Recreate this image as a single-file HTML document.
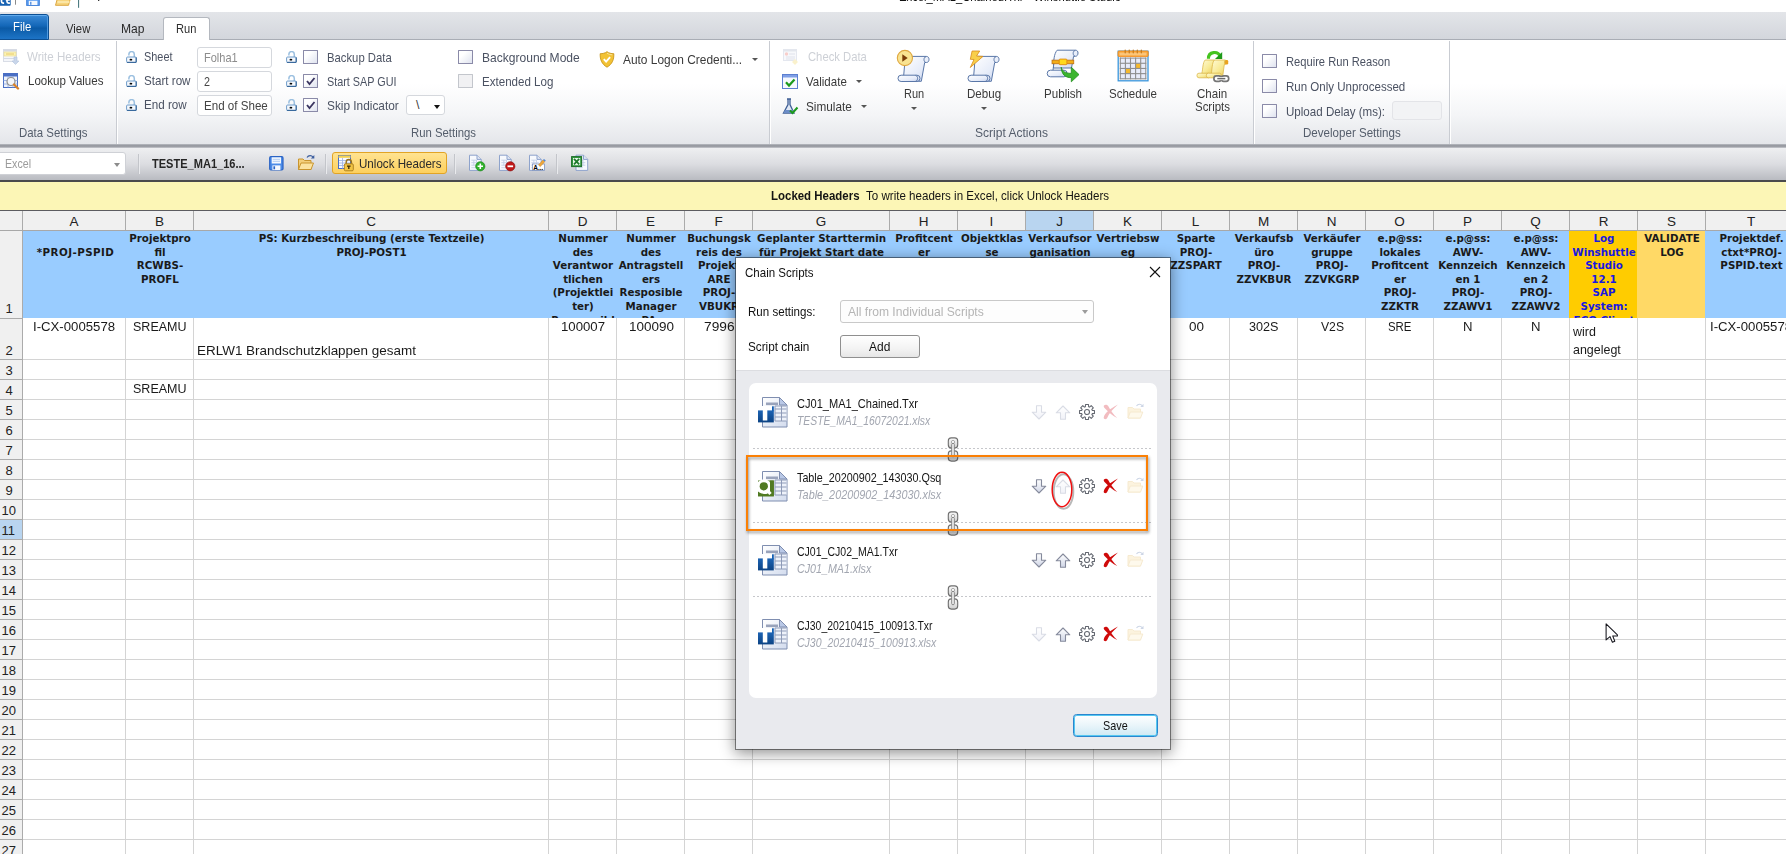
<!DOCTYPE html>
<html lang="en">
<head>
<meta charset="utf-8">
<title>Winshuttle Studio - Chain Scripts</title>
<style>
*{box-sizing:border-box;margin:0;padding:0}
html,body{width:1786px;height:854px;overflow:hidden;background:#fff}
body{position:relative;font-family:"Liberation Sans","DejaVu Sans",sans-serif;font-size:12px;color:#222}
.abs{position:absolute}
.t{position:absolute;white-space:nowrap;line-height:16px;height:16px;font-size:12.4px;color:#3a3a3a;transform-origin:0 0}
.dis{color:#cdd0d6}
.b{color:#4b5262}
.gl{color:#545d6b}
#titlebar{position:absolute;left:0;top:0;width:1786px;height:12px;background:#fff;overflow:hidden}
#tabband{position:absolute;left:0;top:12px;width:1786px;height:28px;background:linear-gradient(#e3e5e9,#d3d6dc);border-bottom:1px solid #a9adb5}
#filetab{position:absolute;left:-2px;top:14px;width:51px;height:26px;border-radius:3px 3px 0 0;background:linear-gradient(#3b8ad6 0%,#1467b8 45%,#0b5aa6 55%,#1d74c6 100%);border:1px solid #0d4f92;color:#fff;box-shadow:inset 0 1px 0 #62aaec,inset -1px 0 0 #4f9ae0}
.tab{position:absolute;transform-origin:0 0;white-space:nowrap;top:20px;font-size:13.5px;line-height:18px;color:#2b2b2b}
#runtab{position:absolute;left:163px;top:17px;width:47px;height:24px;background:#fff;border:1px solid #b4b8bf;border-bottom:none;border-radius:3px 3px 0 0}
#ribbon{position:absolute;left:0;top:40px;width:1786px;height:104px;background:linear-gradient(#ffffff 0%,#ffffff 42%,#f4f5f7 72%,#e4e6ea 100%)}
.rsep{position:absolute;top:1px;width:2px;height:103px;background:linear-gradient(90deg,#c9ccd2 0 1px,#fff 1px 2px)}
.inp{position:absolute;width:75px;height:21px;border:1px solid #d5d8dd;border-radius:3px;background:#fff;overflow:hidden}
.cb{position:absolute;width:15px;height:14px;border:1px solid #8a8aa8;border-radius:.5px;background:linear-gradient(135deg,#ffffff 30%,#dfe3ef)}
.cb.off{border-color:#c3c6cc;background:#f1f1f3}
.arrow{position:absolute;width:0;height:0;border-left:3px solid transparent;border-right:3px solid transparent;border-top:3px solid #555}
#rbottom{position:absolute;left:0;top:144px;width:1786px;height:4px;background:linear-gradient(#b9bcc2,#8d9097 50%,#c9cbd0)}
#toolbar{position:absolute;left:0;top:148px;width:1786px;height:32px;background:linear-gradient(#eeeff1 0%,#dcdde1 50%,#b9bbc1 100%)}
#tbottom{position:absolute;left:0;top:180px;width:1786px;height:2px;background:#4a4a4c}
.tsep{position:absolute;top:6px;width:2px;height:20px;background:linear-gradient(90deg,#c3c5ca 0 1px,#e9eaed 1px 2px)}
#ybar{position:absolute;left:0;top:182px;width:1786px;height:28px;background:#fcf6b6}
#sheet{position:absolute;left:0;top:210px;width:1786px;height:644px;background:#fff;overflow:hidden}
.colh{position:absolute;top:1px;height:19px;padding-top:1px;background:#f0f0f0;border-left:1px solid #ababab;font-size:13.5px;line-height:20px;text-align:center;color:#222}
.hd{position:absolute;top:21px;height:87px;background:#99ccff;overflow:hidden;text-align:center;font-family:"DejaVu Sans","Liberation Sans",sans-serif;font-weight:bold;font-size:10.3px;line-height:13.6px;color:#1a1a1a;padding-top:1px;padding-left:2px;white-space:nowrap}
.vl{position:absolute;top:108px;width:1px;height:540px;background:#d4d4d4}
.rowh{position:absolute;left:0;width:22px;background:#f0f0f0;border-top:1px solid #ababab;font-size:13px;color:#222;text-align:left}
.c{position:absolute;font-size:13.4px;line-height:16px;color:#1a1a1a;white-space:nowrap;text-align:center;transform-origin:0 0}
#dlg{position:absolute;left:735px;top:257px;width:436px;height:493px;background:#e9eaee;border:1px solid rgba(0,0,0,.44);background-clip:padding-box;box-shadow:0 3px 14px rgba(0,0,0,.45)}
#dlgtop{position:absolute;left:0;top:0;width:434px;height:113px;background:#fff;border-bottom:1px solid #dcdde1}
#list{position:absolute;left:13px;top:125px;width:408px;height:314.5px;background:#fff;border-radius:7px}
.dash{position:absolute;left:4px;width:399px;height:1px;background:repeating-linear-gradient(90deg,#c6c7cb 0 2px,transparent 2px 4px)}
</style>
</head>
<body>
<div id="titlebar">
<svg class="abs" style="left:0px;top:0px" width="110" height="12" viewBox="0 0 110 12"><rect x="-4" y="-8" width="14.700" height="13.800" rx="1" fill="#1762b2"/><path d="M1.500 -2v3.600c0 1 .6 1.500 1.600 1.500h1M7 -2v3.600c0 1 .6 1.500 1.600 1.500h1.300M5.800 0h4" stroke="#fff" stroke-width="1.700" fill="none"/><rect x="15" y="0" width="1" height="4.700" fill="#8a8a8a"/><rect x="26.700" y="-6" width="12.600" height="11.400" fill="#5b9df0" stroke="#3f7fd8" stroke-width="1"/><rect x="28.800" y=".8" width="8.600" height="4.200" fill="#f4f8fe"/><rect x="30.200" y="1.800" width="1.200" height="3" fill="#3f7fd8"/><path d="M55.500 5.300l2.500-9h13l-2.500 9z" fill="#f7d57e" stroke="#dba743" stroke-width="1"/><path d="M57.500 2h12" stroke="#fbe6a6" stroke-width="2"/><rect x="78.100" y="0" width="1" height="7.800" fill="#3b6e75"/><rect x="98" y="0" width="1.300" height=".9" fill="#222"/></svg>
<div class="t" style="left:899px;top:-11.4px;font-size:13.4px;color:#111;transform:scaleX(0.840)">Excel_MA1_Chained.Txr - Winshuttle Studio</div>
</div>
<div id="tabband"></div>
<div id="filetab"><div class="tab" style="left:14.2px;top:3px;color:#fff;transform:scaleX(0.836)">File</div></div>
<div class="tab" style="left:65.5px;transform:scaleX(0.837)">View</div>
<div class="tab" style="left:121.3px;transform:scaleX(0.895)">Map</div>
<div id="runtab"></div>
<div class="tab" style="left:176.3px;transform:scaleX(0.820)">Run</div>
<div id="ribbon">
<svg class="abs" style="left:3px;top:9px" width="17" height="16" viewBox="0 0 17 16"><rect x=".5" y=".5" width="13" height="12" fill="#f4f6fa" stroke="#d9dde6"/><rect x=".5" y=".5" width="13" height="2" fill="#d5d9e2"/><rect x="1" y="3" width="12" height="4" fill="#fbf3b5" stroke="#ecd98a" stroke-width=".6"/><path d="M3 5h8" stroke="#e8c96a"/><path d="M1 9.500h10" stroke="#d5dbe6"/><path d="M11 8h3v4h2l-3.500 3.500L9 12h2z" fill="#c9d6ea" stroke="#b4c4dd" stroke-width=".6"/></svg>
<div class="t dis" style="left:27.4px;top:9px;transform:scaleX(0.932)">Write Headers</div>
<svg class="abs" style="left:3px;top:33px" width="17" height="17" viewBox="0 0 17 17"><rect x=".5" y=".5" width="14" height="14" fill="#eef3fc" stroke="#4a6fc4"/><rect x=".5" y=".5" width="14" height="3" fill="#4a6fc4"/><path d="M.5 7.500h14M.5 11h14M5 3.500v11M10 3.500v11" stroke="#8aa6e0" stroke-width=".8"/><circle cx="8" cy="8.500" r="4" fill="#f4f7fb" stroke="#8f8f8f" stroke-width="1.200"/><path d="M11 11.500l4 4" stroke="#d9822a" stroke-width="2.400" stroke-linecap="round"/></svg>
<div class="t " style="left:27.5px;top:33px;transform:scaleX(0.931)">Lookup Values</div>
<div class="t gl" style="left:19.3px;top:85px;transform:scaleX(0.922)">Data Settings</div>
<div class="rsep" style="left:116px"></div>
<svg class="abs" style="left:126px;top:11.3px" width="11" height="12" viewBox="0 0 11 12"><path d="M8.300 6.500V3.300a2.700 2.700 0 0 0-5.400 0V4.400" fill="none" stroke="#9cc0e0" stroke-width="1.500"/><rect x=".6" y="6" width="9.600" height="5.600" rx="1" fill="#f4f8fd" stroke="#6f9ccb" stroke-width="1"/><path d="M1 11.300h9.200v-5" fill="none" stroke="#2a5c92" stroke-width="1"/><ellipse cx="4.900" cy="8.700" rx="1.400" ry=".85" fill="#050505"/></svg>
<div class="t b" style="left:144.3px;top:9px;transform:scaleX(0.880)">Sheet</div>
<svg class="abs" style="left:126px;top:35.3px" width="11" height="12" viewBox="0 0 11 12"><path d="M8.300 6.500V3.300a2.700 2.700 0 0 0-5.400 0V4.400" fill="none" stroke="#9cc0e0" stroke-width="1.500"/><rect x=".6" y="6" width="9.600" height="5.600" rx="1" fill="#f4f8fd" stroke="#6f9ccb" stroke-width="1"/><path d="M1 11.300h9.200v-5" fill="none" stroke="#2a5c92" stroke-width="1"/><ellipse cx="4.900" cy="8.700" rx="1.400" ry=".85" fill="#050505"/></svg>
<div class="t b" style="left:144.3px;top:33px;transform:scaleX(0.938)">Start row</div>
<svg class="abs" style="left:126px;top:59.3px" width="11" height="12" viewBox="0 0 11 12"><path d="M8.300 6.500V3.300a2.700 2.700 0 0 0-5.400 0V4.400" fill="none" stroke="#9cc0e0" stroke-width="1.500"/><rect x=".6" y="6" width="9.600" height="5.600" rx="1" fill="#f4f8fd" stroke="#6f9ccb" stroke-width="1"/><path d="M1 11.300h9.200v-5" fill="none" stroke="#2a5c92" stroke-width="1"/><ellipse cx="4.900" cy="8.700" rx="1.400" ry=".85" fill="#050505"/></svg>
<div class="t b" style="left:144.3px;top:57px;transform:scaleX(0.939)">End row</div>
<div class="inp" style="left:197px;top:7px"><div class="abs" style="left:0;top:0;width:69.5px;height:20px;overflow:hidden"><div class="t" style="left:6px;top:1.5px;color:#8c8c8c;transform:scaleX(0.889)">Folha1</div></div></div>
<div class="inp" style="left:197px;top:31px"><div class="abs" style="left:0;top:0;width:69.5px;height:20px;overflow:hidden"><div class="t" style="left:6px;top:1.5px;color:#444;transform:scaleX(0.869)">2</div></div></div>
<div class="inp" style="left:197px;top:55px"><div class="abs" style="left:0;top:0;width:69.5px;height:20px;overflow:hidden"><div class="t" style="left:6px;top:1.5px;color:#444;transform:scaleX(0.935)">End of Sheet</div></div></div>
<svg class="abs" style="left:285.6px;top:11.3px" width="11" height="12" viewBox="0 0 11 12"><path d="M8.300 6.500V3.300a2.700 2.700 0 0 0-5.400 0V4.400" fill="none" stroke="#9cc0e0" stroke-width="1.500"/><rect x=".6" y="6" width="9.600" height="5.600" rx="1" fill="#f4f8fd" stroke="#6f9ccb" stroke-width="1"/><path d="M1 11.300h9.200v-5" fill="none" stroke="#2a5c92" stroke-width="1"/><ellipse cx="4.900" cy="8.700" rx="1.400" ry=".85" fill="#050505"/></svg>
<div class="cb" style="left:303px;top:10px"></div>
<div class="t b" style="left:327.3px;top:10px;transform:scaleX(0.912)">Backup Data</div>
<svg class="abs" style="left:285.6px;top:35.3px" width="11" height="12" viewBox="0 0 11 12"><path d="M8.300 6.500V3.300a2.700 2.700 0 0 0-5.400 0V4.400" fill="none" stroke="#9cc0e0" stroke-width="1.500"/><rect x=".6" y="6" width="9.600" height="5.600" rx="1" fill="#f4f8fd" stroke="#6f9ccb" stroke-width="1"/><path d="M1 11.300h9.200v-5" fill="none" stroke="#2a5c92" stroke-width="1"/><ellipse cx="4.900" cy="8.700" rx="1.400" ry=".85" fill="#050505"/></svg>
<div class="cb" style="left:303px;top:34px"><svg width="13" height="12" viewBox="0 0 13 12" style="position:absolute;left:0;top:0"><path d="M3 6l2.500 3L10.500 3" fill="none" stroke="#3a3560" stroke-width="1.800"/></svg></div>
<div class="t b" style="left:327.3px;top:34px;transform:scaleX(0.872)">Start SAP GUI</div>
<svg class="abs" style="left:285.6px;top:59.3px" width="11" height="12" viewBox="0 0 11 12"><path d="M8.300 6.500V3.300a2.700 2.700 0 0 0-5.400 0V4.400" fill="none" stroke="#9cc0e0" stroke-width="1.500"/><rect x=".6" y="6" width="9.600" height="5.600" rx="1" fill="#f4f8fd" stroke="#6f9ccb" stroke-width="1"/><path d="M1 11.300h9.200v-5" fill="none" stroke="#2a5c92" stroke-width="1"/><ellipse cx="4.900" cy="8.700" rx="1.400" ry=".85" fill="#050505"/></svg>
<div class="cb" style="left:303px;top:58px"><svg width="13" height="12" viewBox="0 0 13 12" style="position:absolute;left:0;top:0"><path d="M3 6l2.500 3L10.500 3" fill="none" stroke="#3a3560" stroke-width="1.800"/></svg></div>
<div class="t b" style="left:327.3px;top:58px;transform:scaleX(0.955)">Skip Indicator</div>
<div class="inp" style="left:406px;top:55px;width:39px;height:20px"><div class="t" style="left:9px;top:1px">\</div><div class="arrow" style="left:27px;top:9px;border-width:4px 3.5px 0;border-top-color:#111"></div></div>
<div class="cb" style="left:458px;top:10px"></div>
<div class="t b" style="left:482.4px;top:10px;transform:scaleX(0.972)">Background Mode</div>
<div class="cb off" style="left:458px;top:34px"></div>
<div class="t b" style="left:482.4px;top:34px;transform:scaleX(0.934)">Extended Log</div>
<svg class="abs" style="left:599px;top:11px" width="16" height="17" viewBox="0 0 16 17"><path d="M8 .7c2 1.500 4.300 2 6.800 2 .3 6-1.700 10.500-6.800 13.500C2.900 13.200.9 8.700 1.200 2.700 3.700 2.700 6 2.200 8 .7z" fill="#f2c235" stroke="#c9951a" stroke-width=".9"/><path d="M8 2.200c1.700 1.100 3.400 1.500 5.300 1.600" fill="none" stroke="#fbe59a" stroke-width="1"/><path d="M4.800 8.200l2.300 2.400 4-4.400" fill="none" stroke="#fff" stroke-width="1.900"/></svg>
<div class="t " style="left:623.3px;top:12px;transform:scaleX(0.961)">Auto Logon Credenti...</div>
<div class="arrow" style="left:752px;top:18px"></div>
<div class="t gl" style="left:410.7px;top:85px;transform:scaleX(0.916)">Run Settings</div>
<div class="rsep" style="left:769px"></div>
<svg class="abs" style="left:783px;top:9px;opacity:.55" width="17" height="16" viewBox="0 0 17 16"><rect x=".5" y=".5" width="13" height="11" fill="#f2f4f9" stroke="#cfd5e2"/><rect x=".5" y=".5" width="13" height="2" fill="#cdd3e0"/><circle cx="3.500" cy="5" r="1.700" fill="#f3a7a0"/><path d="M6 5h6M3 8h9M3 10h9" stroke="#c5ccdb"/><path d="M12 10l3 3-3 3-3-3z" fill="#f7e7a4"/></svg>
<div class="t dis" style="left:808.4px;top:9px;transform:scaleX(0.908)">Check Data</div>
<svg class="abs" style="left:782px;top:34px" width="17" height="15" viewBox="0 0 17 15"><rect x=".5" y=".5" width="15" height="14" fill="#f6f8fe" stroke="#5c7fd0"/><rect x="1" y="1" width="14" height="2.500" fill="#7f9fe6"/><path d="M4 8.200l3 3.300 5.500-6" fill="none" stroke="#1c9a1c" stroke-width="2.200"/></svg>
<div class="t " style="left:806.2px;top:34px;transform:scaleX(0.930)">Validate</div>
<div class="arrow" style="left:856px;top:40px"></div>
<svg class="abs" style="left:782px;top:58px" width="17" height="17" viewBox="0 0 17 17"><path d="M5 1h4M6 1.500v5L1.500 15h10.500L8 6.500v-5" fill="#dfe7f5" stroke="#3f5f95" stroke-width="1.300"/><path d="M3 12l-1.500 3h10.500l-1.500-3z" fill="#6b8cc7"/><path d="M8 12.500l2.500 2.500 5-5.500" fill="none" stroke="#1c9a1c" stroke-width="2"/></svg>
<div class="t " style="left:806.2px;top:59px;transform:scaleX(0.950)">Simulate</div>
<div class="arrow" style="left:861px;top:65px"></div>
<svg class="abs" style="left:896px;top:9px" width="34" height="34" viewBox="0 0 34 34"><defs><linearGradient id="SG" x1="0" y1="0" x2="1" y2="1"><stop offset="0" stop-color="#ffffff"/><stop offset=".6" stop-color="#e6ecf9"/><stop offset="1" stop-color="#c3d0ee"/></linearGradient></defs><path d="M9 7.400H30.300C32.300 7.400 33 8.900 33 10.400 33 12.300 32 13.500 30.400 13.500H28.700L25.300 32.300H7.200L8.500 17z" fill="url(#SG)" stroke="#5a77a8" stroke-width="1" stroke-linejoin="round"/><path d="M30.200 7.600C28.400 8 28 9.500 28 10.500 28 12 28.600 13 29.700 13.400" fill="none" stroke="#5a77a8" stroke-width="1"/><rect x="2" y="26.200" width="22" height="6.300" rx="3.100" fill="url(#SG)" stroke="#5a77a8" stroke-width="1"/><path d="M19.500 26.400C21.300 27 21.600 28.400 21.600 29.300 21.600 30.600 21 31.800 19.500 32.300" fill="none" stroke="#5a77a8" stroke-width="1"/><circle cx="8.900" cy="9" r="7.600" fill="#f9e391" stroke="#dfa840" stroke-width="1.100"/><path d="M6.300 5.300v7.400l5.400-3.700z" fill="#7a3c08"/></svg>
<div class="t " style="left:903.5px;top:46px;transform:scaleX(0.889)">Run</div>
<div class="arrow" style="left:911px;top:67px"></div>
<svg class="abs" style="left:966px;top:9px" width="34" height="34" viewBox="0 0 34 34"><defs><linearGradient id="SG2" x1="0" y1="0" x2="1" y2="1"><stop offset="0" stop-color="#ffffff"/><stop offset=".6" stop-color="#e6ecf9"/><stop offset="1" stop-color="#c3d0ee"/></linearGradient></defs><path d="M9 7.400H30.300C32.300 7.400 33 8.900 33 10.400 33 12.300 32 13.500 30.400 13.500H28.700L25.300 32.300H7.200L8.500 17z" fill="url(#SG2)" stroke="#5a77a8" stroke-width="1" stroke-linejoin="round"/><path d="M30.200 7.600C28.400 8 28 9.500 28 10.500 28 12 28.600 13 29.700 13.400" fill="none" stroke="#5a77a8" stroke-width="1"/><rect x="2" y="26.200" width="22" height="6.300" rx="3.100" fill="url(#SG2)" stroke="#5a77a8" stroke-width="1"/><path d="M19.500 26.400C21.300 27 21.600 28.400 21.600 29.300 21.600 30.600 21 31.800 19.500 32.300" fill="none" stroke="#5a77a8" stroke-width="1"/><path d="M6.100 2h7.600l-3.200 5 6.500.4L4.300 18.500 8 10.500l-3.700-.2z" fill="#f8cf4a" stroke="#d98a1a" stroke-width=".8" stroke-linejoin="round"/></svg>
<div class="t " style="left:966.5px;top:46px;transform:scaleX(0.934)">Debug</div>
<div class="arrow" style="left:981px;top:67px"></div>
<svg class="abs" style="left:1046px;top:9px" width="34" height="34" viewBox="0 0 34 34"><defs><linearGradient id="SG3" x1="0" y1="0" x2="1" y2="1"><stop offset="0" stop-color="#ffffff"/><stop offset=".6" stop-color="#e6ecf9"/><stop offset="1" stop-color="#c3d0ee"/></linearGradient></defs><path d="M11.200 1.200H29.500C31.300 1.200 32 2.600 32 4 32 5.900 31 7.300 29.500 7.300H27.600L25.500 19H7.500C7.500 12 8 4.500 11.200 1.200z" fill="url(#SG3)" stroke="#5a77a8" stroke-width="1" stroke-linejoin="round"/><path d="M29.400 1.400C27.600 1.800 27.200 3.200 27.200 4.300 27.200 5.800 27.800 6.800 28.900 7.200" fill="none" stroke="#5a77a8"/><rect x="1.200" y="21.200" width="20" height="6.600" rx="3.300" fill="url(#SG3)" stroke="#5a77a8" stroke-width="1"/><path d="M7 21.200L8 13" stroke="#5a77a8" fill="none"/><rect x="6" y="11.100" width="21.800" height="3.700" fill="#f3ae1a" stroke="#b9660c" stroke-width=".7"/><rect x="13.200" y="10.100" width="7.700" height="5.600" rx=".8" fill="#ffd91c" stroke="#e08a12" stroke-width=".9"/><path d="M15.200 18.200C16 22 19.500 24.500 25.300 24.300V18.200L33 25.600 25.300 32.800V28.600C19.500 29 15.200 25 15.200 18.200z" fill="#3cb52f" stroke="#1f8e1c" stroke-width=".8" stroke-linejoin="round"/></svg>
<div class="t " style="left:1043.5px;top:46px;transform:scaleX(0.937)">Publish</div>
<svg class="abs" style="left:1117px;top:9px" width="32" height="33" viewBox="0 0 32 33"><rect x="1.200" y="2.200" width="29.800" height="29.600" fill="#fff" stroke="#3a96dc" stroke-width="1.300"/><rect x="1" y="2" width="30.200" height="5.500" rx="1" fill="#f9a53a" stroke="#f08a1c" stroke-width=".8"/><rect x="2.500" y="3.600" width="27" height="2.800" fill="#fbc57a"/><path d="M8.2 1.100v2.700" stroke="#c27a1e" stroke-width="1.200" stroke-linecap="round"/><path d="M12.23 1.100v2.700" stroke="#c27a1e" stroke-width="1.200" stroke-linecap="round"/><path d="M16.26 1.100v2.700" stroke="#c27a1e" stroke-width="1.200" stroke-linecap="round"/><path d="M20.29 1.100v2.700" stroke="#c27a1e" stroke-width="1.200" stroke-linecap="round"/><path d="M24.32 1.100v2.700" stroke="#c27a1e" stroke-width="1.200" stroke-linecap="round"/><rect x="3.300" y="9.100" width="25.500" height="20.700" fill="#e8ecfa"/><rect x="18.600" y="14.300" width="5.100" height="5.200" fill="#f6b92e"/><rect x="8.400" y="19.450" width="5.100" height="5.200" fill="#f6b92e"/><path d="M3.3 8.600v21.700" stroke="#8e8e8e" stroke-width="1.100"/><path d="M8.4 8.600v21.700" stroke="#8e8e8e" stroke-width="1.100"/><path d="M13.5 8.600v21.700" stroke="#8e8e8e" stroke-width="1.100"/><path d="M18.6 8.600v21.700" stroke="#8e8e8e" stroke-width="1.100"/><path d="M23.7 8.600v21.700" stroke="#8e8e8e" stroke-width="1.100"/><path d="M28.8 8.600v21.700" stroke="#8e8e8e" stroke-width="1.100"/><path d="M2.800 9.1h26.500" stroke="#8e8e8e" stroke-width="1.100"/><path d="M2.800 14.275h26.500" stroke="#8e8e8e" stroke-width="1.100"/><path d="M2.800 19.45h26.500" stroke="#8e8e8e" stroke-width="1.100"/><path d="M2.800 24.625h26.500" stroke="#8e8e8e" stroke-width="1.100"/><path d="M2.800 29.8h26.500" stroke="#8e8e8e" stroke-width="1.100"/></svg>
<div class="t " style="left:1109px;top:46px;transform:scaleX(0.929)">Schedule</div>
<svg class="abs" style="left:1196px;top:10px" width="34" height="33" viewBox="0 0 34 33"><defs><linearGradient id="YG" x1="0" y1="0" x2="1" y2="1"><stop offset="0" stop-color="#fffbd8"/><stop offset=".55" stop-color="#f8ea95"/><stop offset="1" stop-color="#e9c95a"/></linearGradient></defs><path d="M12.400 8.800C12.400 1.300 22 .6 24.200 6.600" fill="none" stroke="#45c41f" stroke-width="3.100"/><path d="M26.200 1.900V8.900H19z" fill="#1f9a1a"/><path d="M9.200 10H18.500L15.500 23.500H5.800C7 19 6.600 12.500 9.200 10z" fill="url(#YG)" stroke="#dcb84a" stroke-width=".8"/><rect x="1" y="23.200" width="13.500" height="4.600" rx="2" fill="url(#YG)" stroke="#dcb84a" stroke-width=".8"/><rect x="28" y="10" width="4.200" height="4.500" rx="1.300" fill="#eaa21e"/><path d="M18.500 10H29.500C28.300 10.500 28.200 13.500 29.200 14.500H28.300L26.600 27H15C16.200 20 15.700 12.500 18.500 10z" fill="url(#YG)" stroke="#dcb84a" stroke-width=".8"/><rect x="10.400" y="23.200" width="15" height="4.600" rx="2" fill="url(#YG)" stroke="#dcb84a" stroke-width=".8"/><rect x="17.900" y="25.900" width="7.400" height="5.400" rx="2.500" fill="#fff" stroke="#757575" stroke-width="1.700"/><rect x="25.300" y="25.900" width="7.400" height="5.400" rx="2.500" fill="#fff" stroke="#757575" stroke-width="1.700"/><path d="M21.300 28.600h8" stroke="#fff" stroke-width="3"/><path d="M21.300 28.600h8" stroke="#6a6a6a" stroke-width="1.500"/></svg>
<div class="t " style="left:1197.4px;top:46px;transform:scaleX(0.933)">Chain</div>
<div class="t " style="left:1195px;top:58.6px;transform:scaleX(0.924)">Scripts</div>
<div class="t gl" style="left:975px;top:85px;transform:scaleX(0.972)">Script Actions</div>
<div class="rsep" style="left:1253px"></div>
<div class="cb" style="left:1262px;top:14px"></div>
<div class="t b" style="left:1286.4px;top:14px;transform:scaleX(0.900)">Require Run Reason</div>
<div class="cb" style="left:1262px;top:39px"></div>
<div class="t b" style="left:1286.4px;top:39px;transform:scaleX(0.931)">Run Only Unprocessed</div>
<div class="cb" style="left:1262px;top:64px"></div>
<div class="t b" style="left:1286.4px;top:64px;transform:scaleX(0.934)">Upload Delay (ms):</div>
<div class="abs" style="left:1392px;top:61px;width:50px;height:19px;border:1px solid #e3e4e8;border-radius:3px;background:#f2f3f5"></div>
<div class="t gl" style="left:1303.2px;top:85px;transform:scaleX(0.934)">Developer Settings</div>
<div class="rsep" style="left:1449px"></div>
</div>
<div id="rbottom"></div>
<div id="toolbar">
<div class="abs" style="left:-4px;top:4px;width:129.500px;height:23px;background:#fff;border:1px solid #cfd1d6;border-radius:3px"></div>
<div class="t " style="left:4.7px;top:8px;transform:scaleX(0.858);color:#9b9b9b">Excel</div>
<div class="arrow" style="left:114px;top:15px;border-width:4px 3.5px 0;border-top-color:#8c8c8c"></div>
<div class="tsep" style="left:138px"></div>
<div class="t " style="left:151.7px;top:8px;transform:scaleX(0.891);font-weight:bold;color:#262626">TESTE_MA1_16...</div>
<svg class="abs" style="left:269px;top:8px" width="15" height="15" viewBox="0 0 15 15"><rect x=".7" y=".7" width="13.300" height="13.300" rx="1.200" fill="#4c8ce8" stroke="#2a63c4" stroke-width="1.200"/><rect x="2.700" y="1.300" width="9.300" height="6.200" fill="#f4f8fe"/><path d="M3.700 3.300h7.300M3.700 5.300h7.300" stroke="#a9c6f0" stroke-width=".9"/><rect x="3.400" y="9.400" width="8" height="4.600" fill="#f6f9fe"/><rect x="4.400" y="10.300" width="1.700" height="3" fill="#2a63c4"/></svg>
<svg class="abs" style="left:297px;top:6px" width="18" height="17" viewBox="0 0 18 17"><path d="M10 3.500c1.500-2.500 4.500-2.500 6-.5" fill="none" stroke="#3d5f9f" stroke-width="1.200"/><path d="M17.300 1v3.500h-3.500z" fill="#3d5f9f"/><path d="M1.500 15.500v-10.500h4.500l1.500 1.500h6.500v9z" fill="#f3cf7a" stroke="#c9952e" stroke-width="1"/><path d="M1.500 15.500l2.500-6.500h12.500l-2.500 6.500z" fill="#fbe3a0" stroke="#c9952e" stroke-width="1"/></svg>
<div class="tsep" style="left:325px"></div>
<div class="abs" style="left:332px;top:4px;width:115px;height:22px;border:1px solid #e2a425;border-radius:3px;background:linear-gradient(#ffe391,#fdd05e)"></div>
<svg class="abs" style="left:338px;top:7px" width="17" height="17" viewBox="0 0 17 17"><rect x=".5" y=".5" width="12" height="13" fill="#f8faff" stroke="#4a6fc4"/><rect x=".5" y=".5" width="12" height="2.300" fill="#f3d250"/><path d="M1 5.500h11M1 8h11M1 10.500h11M4.500 3v10.500" stroke="#9bb1e4" stroke-width=".8"/><path d="M8.200 9v-1.800a2.600 2.600 0 0 1 5.200 0V9" fill="none" stroke="#9a7420" stroke-width="1.500"/><rect x="6.300" y="8.800" width="9" height="7" rx="1.200" fill="#f2c443" stroke="#a87c1c" stroke-width=".9"/><path d="M9 11.200h3.600M10.800 11.200v2.800" stroke="#3a2a08" stroke-width="1.300"/></svg>
<div class="t " style="left:358.5px;top:8px;transform:scaleX(0.892);color:#2b2b2b;font-size:13px">Unlock Headers</div>
<div class="tsep" style="left:454px"></div>
<svg class="abs" style="left:468px;top:6px" width="18" height="18" viewBox="0 0 18 18"><path d="M1.500 1.200h7.500l4.200 4.200v11h-11.700z" fill="#f7f9fd" stroke="#8ea3cc" stroke-width="1"/><path d="M9 1.200v4.200h4.200" fill="#dfe6f4" stroke="#8ea3cc" stroke-width="1"/><path d="M3.300 6.200h5.500M3.300 8.700h7.500M3.300 11.200h7.500M3.300 13.700h5M5.800 6.200v5M8.500 6.200v5" stroke="#c3cfe8" stroke-width=".9"/><circle cx="12.300" cy="12.300" r="4.600" fill="#2fb12a" stroke="#1c8a1a" stroke-width=".7"/><path d="M9.600 12.300h5.400M12.300 9.600v5.400" stroke="#fff" stroke-width="1.600"/></svg>
<svg class="abs" style="left:498px;top:6px" width="18" height="18" viewBox="0 0 18 18"><path d="M1.500 1.200h7.500l4.200 4.200v11h-11.700z" fill="#f7f9fd" stroke="#8ea3cc" stroke-width="1"/><path d="M9 1.200v4.200h4.200" fill="#dfe6f4" stroke="#8ea3cc" stroke-width="1"/><path d="M3.300 6.200h5.500M3.300 8.700h7.500M3.300 11.200h7.500M3.300 13.700h5M5.800 6.200v5M8.500 6.200v5" stroke="#c3cfe8" stroke-width=".9"/><circle cx="12.300" cy="12.300" r="4.600" fill="#c01818" stroke="#8e0e0e" stroke-width=".7"/><path d="M9.500 12.300h5.600" stroke="#fff" stroke-width="1.800"/></svg>
<svg class="abs" style="left:528px;top:6px" width="18" height="18" viewBox="0 0 18 18"><path d="M1.500 1.200h7.500l4.200 4.200v11h-11.700z" fill="#f7f9fd" stroke="#8ea3cc" stroke-width="1"/><path d="M9 1.200v4.200h4.200" fill="#dfe6f4" stroke="#8ea3cc" stroke-width="1"/><path d="M3.300 6.200h5.500M3.300 8.700h7.500M3.300 11.200h7.500M3.300 13.700h5M5.800 6.200v5M8.500 6.200v5" stroke="#c3cfe8" stroke-width=".9"/><rect x="4.500" y="10" width="12" height="6.500" fill="#fff" stroke="#7e93bf" stroke-width=".8"/><path d="M10.500 11l4.500-5 1.800 1.600-4.500 5z" fill="#f0a83a" stroke="#c47d16" stroke-width=".5"/><path d="M15 6l1-1.100 1.800 1.600-1 1.100z" fill="#4f86d8"/><text x="5.200" y="15.800" font-family="Liberation Sans,sans-serif" font-weight="bold" font-size="6.500" fill="#000">A...</text></svg>
<div class="tsep" style="left:556px"></div>
<svg class="abs" style="left:571px;top:6px" width="18" height="18" viewBox="0 0 18 18"><g transform="translate(3.500,0)"><path d="M1.500 1.200h7.500l4.200 4.200v11h-11.700z" fill="#f7f9fd" stroke="#8ea3cc" stroke-width="1"/><path d="M9 1.200v4.200h4.200" fill="#dfe6f4" stroke="#8ea3cc" stroke-width="1"/><path d="M3.300 6.200h5.500M3.300 8.700h7.500M3.300 11.200h7.500M3.300 13.700h5M5.800 6.200v5M8.500 6.200v5" stroke="#c3cfe8" stroke-width=".9"/></g><rect x=".6" y="2.600" width="10" height="10" fill="#2f9a3e" stroke="#1e6e2a" stroke-width="1"/><rect x="2" y="4" width="7.200" height="7.200" fill="#e9f6ea"/><path d="M3 4.800l5.200 5.600M8.200 4.800l-5.200 5.600" stroke="#1e7a2c" stroke-width="1.700"/></svg>
</div>
<div id="tbottom"></div>
<div id="ybar">
<div class="t" style="left:771.4px;top:6px;font-weight:bold;color:#141414;transform:scaleX(0.925)">Locked Headers</div>
<div class="t" style="left:865.7px;top:6px;color:#141414;transform:scaleX(0.934)">To write headers in Excel, click Unlock Headers</div>
</div>
<div id="sheet">
<div class="abs" style="left:0;top:0;width:1786px;height:1px;background:#5c5c60"></div>
<div class="abs" style="left:0;top:20px;width:1786px;height:1px;background:#a8a8a8;z-index:2"></div>
<div class="abs" style="left:0;top:1px;width:1786px;height:19px;background:#f0f0f0"></div>
<div class="colh" style="left:22px;width:103px">A</div>
<div class="colh" style="left:125px;width:68px">B</div>
<div class="colh" style="left:193px;width:355px">C</div>
<div class="colh" style="left:548px;width:68px">D</div>
<div class="colh" style="left:616px;width:68px">E</div>
<div class="colh" style="left:684px;width:68px">F</div>
<div class="colh" style="left:752px;width:137px">G</div>
<div class="colh" style="left:889px;width:68px">H</div>
<div class="colh" style="left:957px;width:68px">I</div>
<div class="colh" style="left:1025px;width:68px;background:#b9d5f0">J</div>
<div class="colh" style="left:1093px;width:68px">K</div>
<div class="colh" style="left:1161px;width:68px">L</div>
<div class="colh" style="left:1229px;width:68px">M</div>
<div class="colh" style="left:1297px;width:68px">N</div>
<div class="colh" style="left:1365px;width:68px">O</div>
<div class="colh" style="left:1433px;width:68px">P</div>
<div class="colh" style="left:1501px;width:68px">Q</div>
<div class="colh" style="left:1569px;width:68px">R</div>
<div class="colh" style="left:1637px;width:68px">S</div>
<div class="colh" style="left:1705px;width:91px">T</div>
<div class="hd" style="left:23px;width:103px;letter-spacing:.45px"><br>*PROJ-PSPID</div>
<div class="hd" style="left:125px;width:68px">Projektpro<br>fil<br>RCWBS-<br>PROFL</div>
<div class="hd" style="left:193px;width:355px">PS: Kurzbeschreibung (erste Textzeile)<br>PROJ-POST1</div>
<div class="hd" style="left:548px;width:68px">Nummer<br>des<br>Verantwor<br>tlichen<br>(Projektlei<br>ter)<br>Responsibl</div>
<div class="hd" style="left:616px;width:68px">Nummer<br>des<br>Antragstell<br>ers<br>Resposible<br>Manager<br>PA-</div>
<div class="hd" style="left:684px;width:68px">Buchungsk<br>reis des<br>Projekt<br>ARE<br>PROJ-<br>VBUKR</div>
<div class="hd" style="left:752px;width:137px">Geplanter Starttermin<br>für Projekt Start date</div>
<div class="hd" style="left:889px;width:68px">Profitcent<br>er</div>
<div class="hd" style="left:957px;width:68px">Objektklas<br>se</div>
<div class="hd" style="left:1025px;width:68px">Verkaufsor<br>ganisation</div>
<div class="hd" style="left:1093px;width:68px">Vertriebsw<br>eg</div>
<div class="hd" style="left:1161px;width:68px">Sparte<br>PROJ-<br>ZZSPART</div>
<div class="hd" style="left:1229px;width:68px">Verkaufsb<br>üro<br>PROJ-<br>ZZVKBUR</div>
<div class="hd" style="left:1297px;width:68px">Verkäufer<br>gruppe<br>PROJ-<br>ZZVKGRP</div>
<div class="hd" style="left:1365px;width:68px">e.p@ss:<br>lokales<br>Profitcent<br>er<br>PROJ-<br>ZZKTR</div>
<div class="hd" style="left:1433px;width:68px">e.p@ss:<br>AWV-<br>Kennzeich<br>en 1<br>PROJ-<br>ZZAWV1</div>
<div class="hd" style="left:1501px;width:68px">e.p@ss:<br>AWV-<br>Kennzeich<br>en 2<br>PROJ-<br>ZZAWV2</div>
<div class="hd" style="left:1569px;width:68px;background:#ffcc00;color:#1818e0">Log<br>Winshuttle<br>Studio<br>12.1<br>SAP<br>System:<br>ECQ Client</div>
<div class="hd" style="left:1637px;width:68px;background:#ffd966">VALIDATE<br>LOG</div>
<div class="hd" style="left:1705px;width:91px">Projektdef.<br>ctxt*PROJ-<br>PSPID.text</div>
<div class="vl" style="left:22px"></div>
<div class="vl" style="left:125px"></div>
<div class="vl" style="left:193px"></div>
<div class="vl" style="left:548px"></div>
<div class="vl" style="left:616px"></div>
<div class="vl" style="left:684px"></div>
<div class="vl" style="left:752px"></div>
<div class="vl" style="left:889px"></div>
<div class="vl" style="left:957px"></div>
<div class="vl" style="left:1025px"></div>
<div class="vl" style="left:1093px"></div>
<div class="vl" style="left:1161px"></div>
<div class="vl" style="left:1229px"></div>
<div class="vl" style="left:1297px"></div>
<div class="vl" style="left:1365px"></div>
<div class="vl" style="left:1433px"></div>
<div class="vl" style="left:1501px"></div>
<div class="vl" style="left:1569px"></div>
<div class="vl" style="left:1637px"></div>
<div class="vl" style="left:1705px"></div>
<div class="abs" style="left:0;top:20px;width:23px;height:640px;background:#f0f0f0;border-right:1px solid #ababab"></div>
<div class="rowh" style="top:20px;height:88px;padding-left:5.5px;line-height:156px">1</div>
<div class="rowh" style="top:108px;height:41px;padding-left:5.5px;line-height:64px">2</div>
<div class="abs" style="left:23px;top:149px;width:1770px;height:1px;background:#d4d4d4"></div>
<div class="rowh" style="top:149px;height:20px;padding-left:5.5px;line-height:22px">3</div>
<div class="abs" style="left:23px;top:169px;width:1770px;height:1px;background:#d4d4d4"></div>
<div class="rowh" style="top:169px;height:20px;padding-left:5.5px;line-height:22px">4</div>
<div class="abs" style="left:23px;top:189px;width:1770px;height:1px;background:#d4d4d4"></div>
<div class="rowh" style="top:189px;height:20px;padding-left:5.5px;line-height:22px">5</div>
<div class="abs" style="left:23px;top:209px;width:1770px;height:1px;background:#d4d4d4"></div>
<div class="rowh" style="top:209px;height:20px;padding-left:5.5px;line-height:22px">6</div>
<div class="abs" style="left:23px;top:229px;width:1770px;height:1px;background:#d4d4d4"></div>
<div class="rowh" style="top:229px;height:20px;padding-left:5.5px;line-height:22px">7</div>
<div class="abs" style="left:23px;top:249px;width:1770px;height:1px;background:#d4d4d4"></div>
<div class="rowh" style="top:249px;height:20px;padding-left:5.5px;line-height:22px">8</div>
<div class="abs" style="left:23px;top:269px;width:1770px;height:1px;background:#d4d4d4"></div>
<div class="rowh" style="top:269px;height:20px;padding-left:5.5px;line-height:22px">9</div>
<div class="abs" style="left:23px;top:289px;width:1770px;height:1px;background:#d4d4d4"></div>
<div class="rowh" style="top:289px;height:20px;padding-left:1.5px;line-height:22px">10</div>
<div class="abs" style="left:23px;top:309px;width:1770px;height:1px;background:#d4d4d4"></div>
<div class="rowh" style="top:309px;height:20px;padding-left:1.5px;line-height:22px;background:#b9d5f0">11</div>
<div class="abs" style="left:23px;top:329px;width:1770px;height:1px;background:#d4d4d4"></div>
<div class="rowh" style="top:329px;height:20px;padding-left:1.5px;line-height:22px">12</div>
<div class="abs" style="left:23px;top:349px;width:1770px;height:1px;background:#d4d4d4"></div>
<div class="rowh" style="top:349px;height:20px;padding-left:1.5px;line-height:22px">13</div>
<div class="abs" style="left:23px;top:369px;width:1770px;height:1px;background:#d4d4d4"></div>
<div class="rowh" style="top:369px;height:20px;padding-left:1.5px;line-height:22px">14</div>
<div class="abs" style="left:23px;top:389px;width:1770px;height:1px;background:#d4d4d4"></div>
<div class="rowh" style="top:389px;height:20px;padding-left:1.5px;line-height:22px">15</div>
<div class="abs" style="left:23px;top:409px;width:1770px;height:1px;background:#d4d4d4"></div>
<div class="rowh" style="top:409px;height:20px;padding-left:1.5px;line-height:22px">16</div>
<div class="abs" style="left:23px;top:429px;width:1770px;height:1px;background:#d4d4d4"></div>
<div class="rowh" style="top:429px;height:20px;padding-left:1.5px;line-height:22px">17</div>
<div class="abs" style="left:23px;top:449px;width:1770px;height:1px;background:#d4d4d4"></div>
<div class="rowh" style="top:449px;height:20px;padding-left:1.5px;line-height:22px">18</div>
<div class="abs" style="left:23px;top:469px;width:1770px;height:1px;background:#d4d4d4"></div>
<div class="rowh" style="top:469px;height:20px;padding-left:1.5px;line-height:22px">19</div>
<div class="abs" style="left:23px;top:489px;width:1770px;height:1px;background:#d4d4d4"></div>
<div class="rowh" style="top:489px;height:20px;padding-left:1.5px;line-height:22px">20</div>
<div class="abs" style="left:23px;top:509px;width:1770px;height:1px;background:#d4d4d4"></div>
<div class="rowh" style="top:509px;height:20px;padding-left:1.5px;line-height:22px">21</div>
<div class="abs" style="left:23px;top:529px;width:1770px;height:1px;background:#d4d4d4"></div>
<div class="rowh" style="top:529px;height:20px;padding-left:1.5px;line-height:22px">22</div>
<div class="abs" style="left:23px;top:549px;width:1770px;height:1px;background:#d4d4d4"></div>
<div class="rowh" style="top:549px;height:20px;padding-left:1.5px;line-height:22px">23</div>
<div class="abs" style="left:23px;top:569px;width:1770px;height:1px;background:#d4d4d4"></div>
<div class="rowh" style="top:569px;height:20px;padding-left:1.5px;line-height:22px">24</div>
<div class="abs" style="left:23px;top:589px;width:1770px;height:1px;background:#d4d4d4"></div>
<div class="rowh" style="top:589px;height:20px;padding-left:1.5px;line-height:22px">25</div>
<div class="abs" style="left:23px;top:609px;width:1770px;height:1px;background:#d4d4d4"></div>
<div class="rowh" style="top:609px;height:20px;padding-left:1.5px;line-height:22px">26</div>
<div class="abs" style="left:23px;top:629px;width:1770px;height:1px;background:#d4d4d4"></div>
<div class="rowh" style="top:629px;height:20px;padding-left:1.5px;line-height:22px">27</div>
<div class="abs" style="left:23px;top:649px;width:1770px;height:1px;background:#d4d4d4"></div>
<div class="c" style="left:33.2px;top:108.5px;transform:scaleX(0.984)">I-CX-0005578</div>
<div class="c" style="left:132.8px;top:108.5px;transform:scaleX(0.935)">SREAMU</div>
<div class="c" style="left:196.6px;top:132.8px;transform:scaleX(1.005)">ERLW1 Brandschutzklappen gesamt</div>
<div class="c" style="left:561.0px;top:108.5px;transform:scaleX(0.985)">100007</div>
<div class="c" style="left:628.5px;top:108.5px;transform:scaleX(1.007)">100090</div>
<div class="c" style="left:704.2px;top:108.5px;transform:scaleX(1.024)">7996</div>
<div class="c" style="left:132.8px;top:170.5px;transform:scaleX(0.935)">SREAMU</div>
<div class="c" style="left:1188.5px;top:108.5px;transform:scaleX(1.006)">00</div>
<div class="c" style="left:1249.2px;top:108.5px;transform:scaleX(0.943)">302S</div>
<div class="c" style="left:1320.5px;top:108.5px;transform:scaleX(0.909)">V2S</div>
<div class="c" style="left:1388.2px;top:108.5px;transform:scaleX(0.853)">SRE</div>
<div class="c" style="left:1463.2px;top:108.5px;transform:scaleX(0.982)">N</div>
<div class="c" style="left:1531.2px;top:108.5px;transform:scaleX(0.982)">N</div>
<div class="abs" style="left:1570px;top:108px;width:67px;height:42px;overflow:hidden"><div class="c" style="left:3px;top:-13.500px;text-align:left;line-height:18px;transform:scaleX(.93)">0005578<br>wird<br>angelegt</div></div>
<div class="c" style="left:1710.3px;top:108.5px;transform:scaleX(0.984)">I-CX-0005578</div>
<svg class="abs" style="left:1604.8px;top:413px" width="14" height="21" viewBox="0 0 14 21"><path d="M1.100.9V16.900L5 13.600 7.400 19.200 9.800 18.200 7.700 12.900H12.400V11.800z" fill="#fff" stroke="#15151c" stroke-width="1.050" stroke-linejoin="round"/></svg>
</div>
<div id="dlg">
<div id="dlgtop">
<div class="t " style="left:8.5px;top:7.1px;transform:scaleX(0.930);color:#111">Chain Scripts</div>
<svg class="abs" style="left:413px;top:8px" width="12" height="12" viewBox="0 0 12 12"><path d="M1 1l10 10M11 1L1 11" stroke="#111" stroke-width="1.100"/></svg>
<div class="t " style="left:12.1px;top:45.8px;transform:scaleX(0.933);color:#111">Run settings:</div>
<div class="abs" style="left:104px;top:42px;width:254px;height:23px;border:1px solid #c9c9c9;border-radius:3px;background:#fdfdfd"></div>
<div class="t " style="left:112.3px;top:45.8px;transform:scaleX(0.976);color:#b5b5b5">All from Individual Scripts</div>
<div class="arrow" style="left:346px;top:52px;border-width:4px 3.5px 0;border-top-color:#9c9c9c"></div>
<div class="t " style="left:12.1px;top:80.8px;transform:scaleX(0.948);color:#111">Script chain</div>
<div class="abs" style="left:104px;top:77px;width:80px;height:23px;border:1px solid #8f8f8f;border-radius:3px;background:linear-gradient(#ffffff,#f3f3f3 60%,#e6e6e6)"></div>
<div class="t " style="left:133.3px;top:80.8px;transform:scaleX(0.966);color:#111">Add</div>
</div>
<div id="list">
<svg class="abs" style="left:8px;top:13.5px" width="31" height="31" viewBox="0 0 31 31"><defs><linearGradient id="DG0" x1="0" y1="0" x2="1" y2="1"><stop offset="0" stop-color="#ffffff"/><stop offset="1" stop-color="#d3dcee"/></linearGradient><linearGradient id="BG0" x1="0" y1="0" x2="0" y2="1"><stop offset="0" stop-color="#1c63b4"/><stop offset="1" stop-color="#0c4384"/></linearGradient></defs><path d="M5.500.5h17l7.500 7.500v22h-24.500z" fill="url(#DG0)" stroke="#7f8eb0" stroke-width="1"/><path d="M22.500.5v7.500h7.500z" fill="#b9c8e6" stroke="#7f8eb0" stroke-width="1"/><rect x="9" y="5.500" width="12" height="2.600" fill="#99a3bb"/><rect x="18" y="9" width="11.500" height="15" fill="#eef2fa"/><path d="M18 9v15M24.500 9v15M18 9h11.500M18 12h11.500M18 16h11.500M18 20h11.500M18 24h11.500" stroke="#8e9bb8" stroke-width="1"/><rect x="4.800" y="9" width="11" height="5" fill="#fff"/><rect x="1" y="13.400" width="15.800" height="12" fill="url(#BG0)"/><rect x="15" y="9.300" width="1.800" height="5" fill="#1560b4"/><rect x="5.800" y="9.300" width="4.500" height="14.200" fill="#fff"/></svg>
<div class="t " style="left:48.4px;top:12.7px;transform:scaleX(0.892);color:#151515">CJ01_MA1_Chained.Txr</div>
<div class="t " style="left:48.4px;top:29.8px;transform:scaleX(0.837);color:#a2a6b0;font-style:italic">TESTE_MA1_16072021.xlsx</div>
<svg class="abs" style="left:282px;top:21.5px" width="16" height="15" viewBox="0 0 16 15"><defs><linearGradient id="AG2820215" x1="0" y1="0" x2="0" y2="1"><stop offset="0" stop-color="#ffffff"/><stop offset="1" stop-color="#f1f2f8"/></linearGradient></defs><path d="M5.500.7h5v6.500h4.300L8 14 1.200 7.200h4.300z" fill="url(#AG2820215)" stroke="#d9dce5" stroke-width="1.100" stroke-linejoin="round"/></svg>
<svg class="abs" style="left:306px;top:21.5px" width="16" height="15" viewBox="0 0 16 15"><defs><linearGradient id="AG3060215" x1="0" y1="0" x2="0" y2="1"><stop offset="0" stop-color="#ffffff"/><stop offset="1" stop-color="#f1f2f8"/></linearGradient></defs><path d="M5.500 14.300h5V7.800h4.300L8 1 1.200 7.800h4.300z" fill="url(#AG3060215)" stroke="#d9dce5" stroke-width="1.100" stroke-linejoin="round"/></svg>
<svg class="abs" style="left:330px;top:21px" width="16" height="16" viewBox="0 0 16 16"><path d="M6.49 0.55L9.51 0.55L9.63 2.75L10.57 3.14L12.20 1.67L14.33 3.80L12.86 5.43L13.25 6.37L15.45 6.49L15.45 9.51L13.25 9.63L12.86 10.57L14.33 12.20L12.20 14.33L10.57 12.86L9.63 13.25L9.51 15.45L6.49 15.45L6.37 13.25L5.43 12.86L3.80 14.33L1.67 12.20L3.14 10.57L2.75 9.63L0.55 9.51L0.55 6.49L2.75 6.37L3.14 5.43L1.67 3.80L3.80 1.67L5.43 3.14L6.37 2.75z" fill="#fff" stroke="#62666f" stroke-width="1.050" stroke-linejoin="round"/><circle cx="8" cy="8" r="2.500" fill="#fff" stroke="#62666f" stroke-width="1.050"/></svg>
<svg class="abs" style="left:354.2px;top:21.3px" width="16" height="16" viewBox="0 0 16 16"><g transform="scale(1.070)"><path d="M.7 12.300C1.600 8.800 5.500 4.800 14 .4 9.300 4.600 5.300 9 3.900 13.200 3.300 14.700.3 14.500.7 12.300z" fill="#f2bcc0"/><path d="M.9 1.500C2 .1 4.100.5 5 2c2.100 3.900 5 8 8.300 11.200C9.300 11.200 4.800 7.300 1.200 3.400.7 2.800.5 2.100.9 1.500z" fill="#f2bcc0"/></g></svg>
<svg class="abs" style="left:377.5px;top:20px" width="17" height="16" viewBox="0 0 17 16"><path d="M9.500 3c1.500-2.300 4.300-2.300 5.700-.3" fill="none" stroke="#cdd6e6" stroke-width="1.100"/><path d="M16.500.8v3.200h-3.200z" fill="#cdd6e6"/><path d="M1 15V4.500h4.500L7 6h6.500v9z" fill="#fcf3de" stroke="#f6ead0" stroke-width="1"/><path d="M1 15l2.300-6h12.500l-2.300 6z" fill="#fef9ec" stroke="#f6ead0" stroke-width="1"/></svg>
<div class="dash" style="top:65px"></div>
<div class="dash" style="top:139px"></div>
<svg class="abs" style="left:8px;top:87.5px" width="31" height="31" viewBox="0 0 31 31"><defs><linearGradient id="DG1" x1="0" y1="0" x2="1" y2="1"><stop offset="0" stop-color="#ffffff"/><stop offset="1" stop-color="#d3dcee"/></linearGradient><linearGradient id="BG1" x1="0" y1="0" x2="0" y2="1"><stop offset="0" stop-color="#1c63b4"/><stop offset="1" stop-color="#0c4384"/></linearGradient></defs><path d="M5.500.5h17l7.500 7.500v22h-24.500z" fill="url(#DG1)" stroke="#7f8eb0" stroke-width="1"/><path d="M22.500.5v7.500h7.500z" fill="#b9c8e6" stroke="#7f8eb0" stroke-width="1"/><rect x="9" y="5.500" width="12" height="2.600" fill="#99a3bb"/><rect x="18" y="9" width="11.500" height="15" fill="#eef2fa"/><path d="M18 9v15M24.500 9v15M18 9h11.500M18 12h11.500M18 16h11.500M18 20h11.500M18 24h11.500" stroke="#8e9bb8" stroke-width="1"/><rect x="1" y="9.500" width="15.800" height="15.800" fill="#507a22"/><circle cx="7" cy="15.800" r="7.600" fill="#fff"/><rect x="13" y="9.500" width="3.800" height="12" fill="#507a22"/><path d="M1 25.300h15.800v-4.500c-5 3-11 3-15.800 0z" fill="#507a22"/><circle cx="6.800" cy="15.300" r="4.100" fill="#507a22"/><path d="M9.500 18.500l4 4.500" stroke="#fff" stroke-width="3.200"/></svg>
<div class="t " style="left:48.4px;top:86.7px;transform:scaleX(0.869);color:#151515">Table_20200902_143030.Qsq</div>
<div class="t " style="left:48.4px;top:103.8px;transform:scaleX(0.874);color:#a2a6b0;font-style:italic">Table_20200902_143030.xlsx</div>
<svg class="abs" style="left:282px;top:95.5px" width="16" height="15" viewBox="0 0 16 15"><defs><linearGradient id="AG2820955" x1="0" y1="0" x2="0" y2="1"><stop offset="0" stop-color="#ffffff"/><stop offset="1" stop-color="#cfd5e6"/></linearGradient></defs><path d="M5.500.7h5v6.500h4.300L8 14 1.200 7.200h4.300z" fill="url(#AG2820955)" stroke="#858a9c" stroke-width="1.100" stroke-linejoin="round"/></svg>
<svg class="abs" style="left:306px;top:95.5px" width="16" height="15" viewBox="0 0 16 15"><defs><linearGradient id="AG3060955" x1="0" y1="0" x2="0" y2="1"><stop offset="0" stop-color="#ffffff"/><stop offset="1" stop-color="#f1f2f8"/></linearGradient></defs><path d="M5.500 14.300h5V7.800h4.300L8 1 1.200 7.800h4.300z" fill="url(#AG3060955)" stroke="#d9dce5" stroke-width="1.100" stroke-linejoin="round"/></svg>
<svg class="abs" style="left:330px;top:95px" width="16" height="16" viewBox="0 0 16 16"><path d="M6.49 0.55L9.51 0.55L9.63 2.75L10.57 3.14L12.20 1.67L14.33 3.80L12.86 5.43L13.25 6.37L15.45 6.49L15.45 9.51L13.25 9.63L12.86 10.57L14.33 12.20L12.20 14.33L10.57 12.86L9.63 13.25L9.51 15.45L6.49 15.45L6.37 13.25L5.43 12.86L3.80 14.33L1.67 12.20L3.14 10.57L2.75 9.63L0.55 9.51L0.55 6.49L2.75 6.37L3.14 5.43L1.67 3.80L3.80 1.67L5.43 3.14L6.37 2.75z" fill="#fff" stroke="#62666f" stroke-width="1.050" stroke-linejoin="round"/><circle cx="8" cy="8" r="2.500" fill="#fff" stroke="#62666f" stroke-width="1.050"/></svg>
<svg class="abs" style="left:354.2px;top:95.3px" width="16" height="16" viewBox="0 0 16 16"><g transform="scale(1.070)"><path d="M.7 12.300C1.600 8.800 5.500 4.800 14 .4 9.300 4.600 5.300 9 3.900 13.200 3.300 14.700.3 14.500.7 12.300z" fill="#cf0a0a"/><path d="M.9 1.500C2 .1 4.100.5 5 2c2.100 3.900 5 8 8.300 11.200C9.300 11.200 4.800 7.300 1.200 3.400.7 2.800.5 2.100.9 1.500z" fill="#cf0a0a"/></g></svg>
<svg class="abs" style="left:377.5px;top:94px" width="17" height="16" viewBox="0 0 17 16"><path d="M9.500 3c1.500-2.300 4.300-2.300 5.700-.3" fill="none" stroke="#cdd6e6" stroke-width="1.100"/><path d="M16.500.8v3.200h-3.200z" fill="#cdd6e6"/><path d="M1 15V4.500h4.500L7 6h6.500v9z" fill="#fcf3de" stroke="#f6ead0" stroke-width="1"/><path d="M1 15l2.300-6h12.500l-2.300 6z" fill="#fef9ec" stroke="#f6ead0" stroke-width="1"/></svg>
<svg class="abs" style="left:8px;top:161.5px" width="31" height="31" viewBox="0 0 31 31"><defs><linearGradient id="DG2" x1="0" y1="0" x2="1" y2="1"><stop offset="0" stop-color="#ffffff"/><stop offset="1" stop-color="#d3dcee"/></linearGradient><linearGradient id="BG2" x1="0" y1="0" x2="0" y2="1"><stop offset="0" stop-color="#1c63b4"/><stop offset="1" stop-color="#0c4384"/></linearGradient></defs><path d="M5.500.5h17l7.500 7.500v22h-24.500z" fill="url(#DG2)" stroke="#7f8eb0" stroke-width="1"/><path d="M22.500.5v7.500h7.500z" fill="#b9c8e6" stroke="#7f8eb0" stroke-width="1"/><rect x="9" y="5.500" width="12" height="2.600" fill="#99a3bb"/><rect x="18" y="9" width="11.500" height="15" fill="#eef2fa"/><path d="M18 9v15M24.500 9v15M18 9h11.500M18 12h11.500M18 16h11.500M18 20h11.500M18 24h11.500" stroke="#8e9bb8" stroke-width="1"/><rect x="4.800" y="9" width="11" height="5" fill="#fff"/><rect x="1" y="13.400" width="15.800" height="12" fill="url(#BG2)"/><rect x="15" y="9.300" width="1.800" height="5" fill="#1560b4"/><rect x="5.800" y="9.300" width="4.500" height="14.200" fill="#fff"/></svg>
<div class="t " style="left:48.4px;top:160.7px;transform:scaleX(0.850);color:#151515">CJ01_CJ02_MA1.Txr</div>
<div class="t " style="left:48.4px;top:177.8px;transform:scaleX(0.863);color:#a2a6b0;font-style:italic">CJ01_MA1.xlsx</div>
<svg class="abs" style="left:282px;top:169.5px" width="16" height="15" viewBox="0 0 16 15"><defs><linearGradient id="AG28201695" x1="0" y1="0" x2="0" y2="1"><stop offset="0" stop-color="#ffffff"/><stop offset="1" stop-color="#cfd5e6"/></linearGradient></defs><path d="M5.500.7h5v6.500h4.300L8 14 1.200 7.200h4.300z" fill="url(#AG28201695)" stroke="#858a9c" stroke-width="1.100" stroke-linejoin="round"/></svg>
<svg class="abs" style="left:306px;top:169.5px" width="16" height="15" viewBox="0 0 16 15"><defs><linearGradient id="AG30601695" x1="0" y1="0" x2="0" y2="1"><stop offset="0" stop-color="#ffffff"/><stop offset="1" stop-color="#cfd5e6"/></linearGradient></defs><path d="M5.500 14.300h5V7.800h4.300L8 1 1.200 7.800h4.300z" fill="url(#AG30601695)" stroke="#858a9c" stroke-width="1.100" stroke-linejoin="round"/></svg>
<svg class="abs" style="left:330px;top:169px" width="16" height="16" viewBox="0 0 16 16"><path d="M6.49 0.55L9.51 0.55L9.63 2.75L10.57 3.14L12.20 1.67L14.33 3.80L12.86 5.43L13.25 6.37L15.45 6.49L15.45 9.51L13.25 9.63L12.86 10.57L14.33 12.20L12.20 14.33L10.57 12.86L9.63 13.25L9.51 15.45L6.49 15.45L6.37 13.25L5.43 12.86L3.80 14.33L1.67 12.20L3.14 10.57L2.75 9.63L0.55 9.51L0.55 6.49L2.75 6.37L3.14 5.43L1.67 3.80L3.80 1.67L5.43 3.14L6.37 2.75z" fill="#fff" stroke="#62666f" stroke-width="1.050" stroke-linejoin="round"/><circle cx="8" cy="8" r="2.500" fill="#fff" stroke="#62666f" stroke-width="1.050"/></svg>
<svg class="abs" style="left:354.2px;top:169.3px" width="16" height="16" viewBox="0 0 16 16"><g transform="scale(1.070)"><path d="M.7 12.300C1.600 8.800 5.500 4.800 14 .4 9.300 4.600 5.300 9 3.900 13.200 3.300 14.700.3 14.500.7 12.300z" fill="#cf0a0a"/><path d="M.9 1.500C2 .1 4.100.5 5 2c2.100 3.900 5 8 8.300 11.200C9.300 11.200 4.800 7.300 1.200 3.400.7 2.800.5 2.100.9 1.500z" fill="#cf0a0a"/></g></svg>
<svg class="abs" style="left:377.5px;top:168px" width="17" height="16" viewBox="0 0 17 16"><path d="M9.500 3c1.500-2.300 4.300-2.300 5.700-.3" fill="none" stroke="#cdd6e6" stroke-width="1.100"/><path d="M16.500.8v3.200h-3.200z" fill="#cdd6e6"/><path d="M1 15V4.500h4.500L7 6h6.500v9z" fill="#fcf3de" stroke="#f6ead0" stroke-width="1"/><path d="M1 15l2.300-6h12.500l-2.300 6z" fill="#fef9ec" stroke="#f6ead0" stroke-width="1"/></svg>
<div class="dash" style="top:213px"></div>
<svg class="abs" style="left:8px;top:235.5px" width="31" height="31" viewBox="0 0 31 31"><defs><linearGradient id="DG3" x1="0" y1="0" x2="1" y2="1"><stop offset="0" stop-color="#ffffff"/><stop offset="1" stop-color="#d3dcee"/></linearGradient><linearGradient id="BG3" x1="0" y1="0" x2="0" y2="1"><stop offset="0" stop-color="#1c63b4"/><stop offset="1" stop-color="#0c4384"/></linearGradient></defs><path d="M5.500.5h17l7.500 7.500v22h-24.500z" fill="url(#DG3)" stroke="#7f8eb0" stroke-width="1"/><path d="M22.500.5v7.500h7.500z" fill="#b9c8e6" stroke="#7f8eb0" stroke-width="1"/><rect x="9" y="5.500" width="12" height="2.600" fill="#99a3bb"/><rect x="18" y="9" width="11.500" height="15" fill="#eef2fa"/><path d="M18 9v15M24.500 9v15M18 9h11.500M18 12h11.500M18 16h11.500M18 20h11.500M18 24h11.500" stroke="#8e9bb8" stroke-width="1"/><rect x="4.800" y="9" width="11" height="5" fill="#fff"/><rect x="1" y="13.400" width="15.800" height="12" fill="url(#BG3)"/><rect x="15" y="9.300" width="1.800" height="5" fill="#1560b4"/><rect x="5.800" y="9.300" width="4.500" height="14.200" fill="#fff"/></svg>
<div class="t " style="left:48.4px;top:234.7px;transform:scaleX(0.844);color:#151515">CJ30_20210415_100913.Txr</div>
<div class="t " style="left:48.4px;top:251.8px;transform:scaleX(0.850);color:#a2a6b0;font-style:italic">CJ30_20210415_100913.xlsx</div>
<svg class="abs" style="left:282px;top:243.5px" width="16" height="15" viewBox="0 0 16 15"><defs><linearGradient id="AG28202435" x1="0" y1="0" x2="0" y2="1"><stop offset="0" stop-color="#ffffff"/><stop offset="1" stop-color="#f1f2f8"/></linearGradient></defs><path d="M5.500.7h5v6.500h4.300L8 14 1.200 7.200h4.300z" fill="url(#AG28202435)" stroke="#d9dce5" stroke-width="1.100" stroke-linejoin="round"/></svg>
<svg class="abs" style="left:306px;top:243.5px" width="16" height="15" viewBox="0 0 16 15"><defs><linearGradient id="AG30602435" x1="0" y1="0" x2="0" y2="1"><stop offset="0" stop-color="#ffffff"/><stop offset="1" stop-color="#cfd5e6"/></linearGradient></defs><path d="M5.500 14.300h5V7.800h4.300L8 1 1.200 7.800h4.300z" fill="url(#AG30602435)" stroke="#858a9c" stroke-width="1.100" stroke-linejoin="round"/></svg>
<svg class="abs" style="left:330px;top:243px" width="16" height="16" viewBox="0 0 16 16"><path d="M6.49 0.55L9.51 0.55L9.63 2.75L10.57 3.14L12.20 1.67L14.33 3.80L12.86 5.43L13.25 6.37L15.45 6.49L15.45 9.51L13.25 9.63L12.86 10.57L14.33 12.20L12.20 14.33L10.57 12.86L9.63 13.25L9.51 15.45L6.49 15.45L6.37 13.25L5.43 12.86L3.80 14.33L1.67 12.20L3.14 10.57L2.75 9.63L0.55 9.51L0.55 6.49L2.75 6.37L3.14 5.43L1.67 3.80L3.80 1.67L5.43 3.14L6.37 2.75z" fill="#fff" stroke="#62666f" stroke-width="1.050" stroke-linejoin="round"/><circle cx="8" cy="8" r="2.500" fill="#fff" stroke="#62666f" stroke-width="1.050"/></svg>
<svg class="abs" style="left:354.2px;top:243.3px" width="16" height="16" viewBox="0 0 16 16"><g transform="scale(1.070)"><path d="M.7 12.300C1.600 8.800 5.500 4.800 14 .4 9.300 4.600 5.300 9 3.900 13.200 3.300 14.700.3 14.500.7 12.300z" fill="#cf0a0a"/><path d="M.9 1.500C2 .1 4.100.5 5 2c2.100 3.900 5 8 8.300 11.200C9.300 11.200 4.800 7.300 1.200 3.400.7 2.800.5 2.100.9 1.500z" fill="#cf0a0a"/></g></svg>
<svg class="abs" style="left:377.5px;top:242px" width="17" height="16" viewBox="0 0 17 16"><path d="M9.500 3c1.500-2.300 4.300-2.300 5.700-.3" fill="none" stroke="#cdd6e6" stroke-width="1.100"/><path d="M16.500.8v3.200h-3.200z" fill="#cdd6e6"/><path d="M1 15V4.500h4.500L7 6h6.500v9z" fill="#fcf3de" stroke="#f6ead0" stroke-width="1"/><path d="M1 15l2.300-6h12.500l-2.300 6z" fill="#fef9ec" stroke="#f6ead0" stroke-width="1"/></svg>
<svg class="abs" style="left:198px;top:53.5px" width="12" height="25" viewBox="0 0 12 25"><defs><linearGradient id="CG53" x1="0" y1="0" x2="0" y2="1"><stop offset="0" stop-color="#fafafa"/><stop offset="1" stop-color="#cfcfcf"/></linearGradient></defs><rect x="1.300" y=".9" width="9.400" height="10.200" rx="3" fill="url(#CG53)" stroke="#6e6e6e" stroke-width="1.100"/><rect x="1.300" y="13.900" width="9.400" height="10.200" rx="3" fill="url(#CG53)" stroke="#6e6e6e" stroke-width="1.100"/><circle cx="6" cy="5" r="1.600" fill="#fff" stroke="#8a8a8a" stroke-width=".7"/><rect x="4.700" y="6.300" width="2.600" height="13.500" rx="1.300" fill="#f2f2f2" stroke="#7a7a7a" stroke-width=".9"/></svg>
<svg class="abs" style="left:198px;top:127.5px" width="12" height="25" viewBox="0 0 12 25"><defs><linearGradient id="CG127" x1="0" y1="0" x2="0" y2="1"><stop offset="0" stop-color="#fafafa"/><stop offset="1" stop-color="#cfcfcf"/></linearGradient></defs><rect x="1.300" y=".9" width="9.400" height="10.200" rx="3" fill="url(#CG127)" stroke="#6e6e6e" stroke-width="1.100"/><rect x="1.300" y="13.900" width="9.400" height="10.200" rx="3" fill="url(#CG127)" stroke="#6e6e6e" stroke-width="1.100"/><circle cx="6" cy="5" r="1.600" fill="#fff" stroke="#8a8a8a" stroke-width=".7"/><rect x="4.700" y="6.300" width="2.600" height="13.500" rx="1.300" fill="#f2f2f2" stroke="#7a7a7a" stroke-width=".9"/></svg>
<svg class="abs" style="left:198px;top:201.5px" width="12" height="25" viewBox="0 0 12 25"><defs><linearGradient id="CG201" x1="0" y1="0" x2="0" y2="1"><stop offset="0" stop-color="#fafafa"/><stop offset="1" stop-color="#cfcfcf"/></linearGradient></defs><rect x="1.300" y=".9" width="9.400" height="10.200" rx="3" fill="url(#CG201)" stroke="#6e6e6e" stroke-width="1.100"/><rect x="1.300" y="13.900" width="9.400" height="10.200" rx="3" fill="url(#CG201)" stroke="#6e6e6e" stroke-width="1.100"/><circle cx="6" cy="5" r="1.600" fill="#fff" stroke="#8a8a8a" stroke-width=".7"/><rect x="4.700" y="6.300" width="2.600" height="13.500" rx="1.300" fill="#f2f2f2" stroke="#7a7a7a" stroke-width=".9"/></svg>
<div class="abs" style="left:-3px;top:72px;width:402px;height:76px;border:2px solid #fb8005;filter:drop-shadow(1.500px 2px 1.500px rgba(0,0,0,.42))"></div>
<svg class="abs" style="left:301px;top:87px;overflow:visible" width="26" height="42" viewBox="0 0 26 42"><ellipse cx="13.500" cy="21.500" rx="9.800" ry="17.300" fill="none" stroke="rgba(0,0,0,.28)" stroke-width="2"/><ellipse cx="12" cy="19.500" rx="9.800" ry="17.300" fill="none" stroke="#f01010" stroke-width="1.500"/></svg>
</div>
<div class="abs" style="left:337px;top:456px;width:85px;height:23px;border:1px solid #2a86cf;border-radius:3.500px;box-shadow:inset 0 0 0 1px #57c8f0;background:linear-gradient(#ffffff,#e9f5fa 50%,#cfe9f4)"></div>
<div class="t " style="left:366.9px;top:459.6px;transform:scaleX(0.874);color:#111">Save</div>
</div>
</body>
</html>
